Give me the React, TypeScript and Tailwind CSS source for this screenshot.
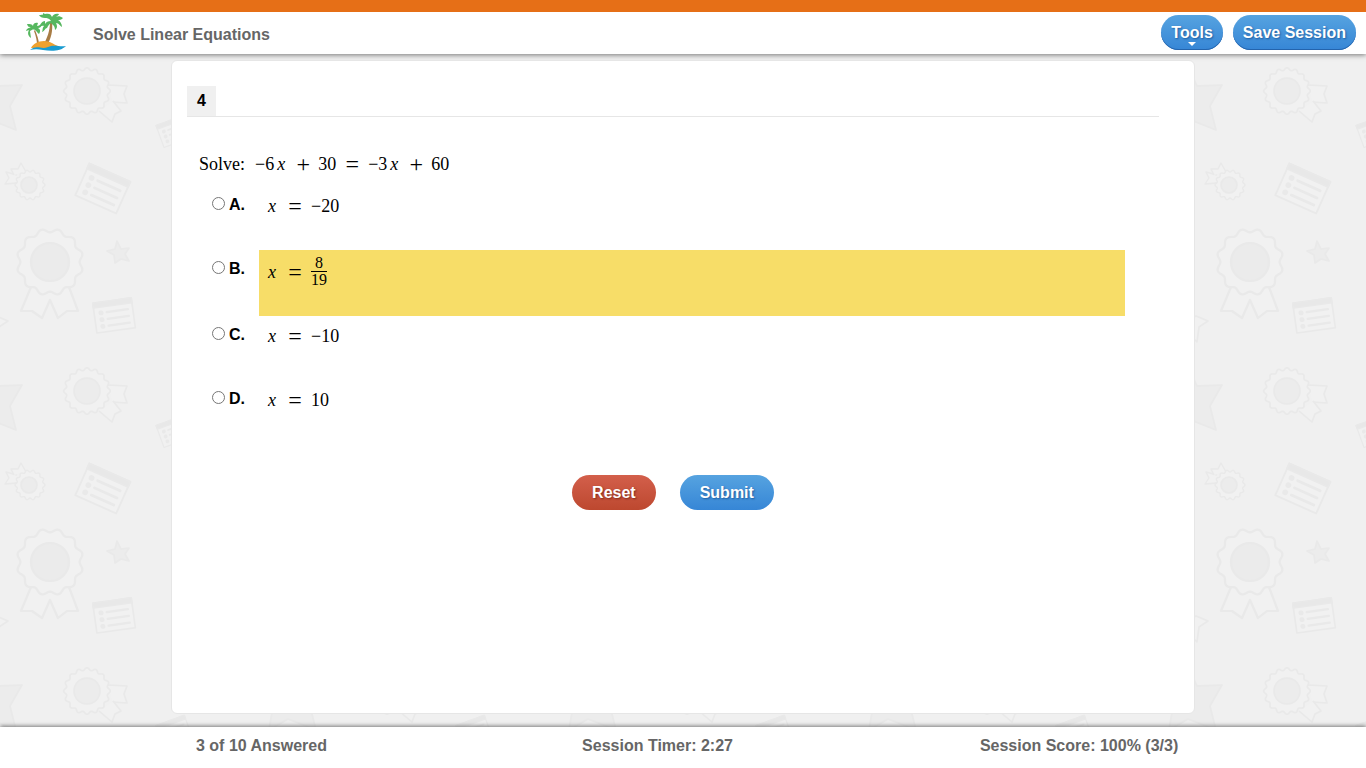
import { useState, type ReactNode } from 'react';

interface Choice {
  letter: string;
  value: ReactNode;
  label: string;
}

// Outline of a rosette with the given number of rounded lobes
function rosette(cx: number, cy: number, radius: number, depth: number, lobes: number, phase = 0) {
  const points: string[] = [];
  for (let i = 0; i < lobes * 12; i++) {
    const angle = (i / (lobes * 12)) * Math.PI * 2;
    const r = radius + depth * Math.cos(lobes * (angle + phase));
    points.push(`${(cx + r * Math.cos(angle)).toFixed(2)},${(cy + r * Math.sin(angle)).toFixed(2)}`);
  }
  return `M${points.join('L')}Z`;
}

function ListSheet() {
  return (
    <g strokeLinecap="round">
      <rect x="-20" y="-15" width="40" height="31" fill="#f1f1f1" />
      <rect x="-20" y="-15" width="40" height="5" fill="#e8e8e8" />
      <path d="M-7-4H15M-7 3H15M-7 10H15" strokeWidth="2.4" />
      <path d="M-13-4h.1M-13 3h.1M-13 10h.1" strokeWidth="5" />
    </g>
  );
}

function PatternBackground() {
  return (
    <svg className="absolute inset-0 -z-10 h-full w-full" aria-hidden="true">
      <defs>
        <pattern id="badges" width="300" height="300" patternUnits="userSpaceOnUse">
          <rect width="300" height="300" fill="#f0f0f0" />
          <g fill="#ececec" stroke="#e9e9e9" strokeWidth="1.6" strokeLinejoin="round">
            {/* Large star, split over the tile's left and right edges */}
            <path d="M22 85L-3 86L-12 66L-22 87L-44 90L-27 106L-31 130L-12 119L16 130L10 106Z" />
            <path d="M322 85L297 86L288 66L278 87L256 90L273 106L269 130L288 119L316 130L310 106Z" />

            <g fill="#f1f1f1">
              <path d="M108 85L127 86L124 94L127 103L112 102" />
              <path d="M99 111L112 122L115 114L121 111L113 101" />
              <path d={rosette(87, 91, 22, 1.3, 16)} />
            </g>
            <circle cx="87" cy="91" r="13" />

            <g fill="#f1f1f1" strokeWidth="1.3">
              <path d="M17 183L5 184L9 178L6 172L17 175" />
              <path d="M14 175L11 169L18 169L21 163L26 172" />
              <path d={rosette(30, 185, 14, 1, 14)} />
            </g>
            <circle cx="29" cy="185" r="8" />

            <g transform="translate(103 188) rotate(24) scale(1.12)">
              <ListSheet />
            </g>
            <g transform="translate(174 131) rotate(-20) scale(.75)">
              <ListSheet />
            </g>
            <g transform="translate(114 315) rotate(-8) scale(.97)">
              <ListSheet />
            </g>
            <g transform="translate(114 15) rotate(-8) scale(.97)">
              <ListSheet />
            </g>

            <g fill="#f1f1f1" strokeWidth="2.2">
              <path d="M31 287L21 311L32 311L42 318L50 300L58 318L67 311L78 311L69 287" />
              <path d="M31-13L21 11L32 11L42 18L50 0L58 18L67 11L78 11L69-13" />
              <path d={rosette(50, 262, 31.5, 1.9, 12, Math.PI / 12)} />
              <circle cx="50" cy="262" r="19" fill="#ebebeb" />
            </g>
            <path d="M117 241L121 249L129 248L125 254L129 261L121 259L115 263L114 255L107 251L115 249Z" />
            <path d="M-4 16L8 21L-1 27L-3 42L-13 32L-24 35L-17 23Z" fill="#f1f1f1" />
            <path d="M296 16L308 21L299 27L297 42L287 32L276 35L283 23Z" fill="#f1f1f1" />
          </g>
        </pattern>
      </defs>
      <rect width="100%" height="100%" fill="url(#badges)" />
    </svg>
  );
}

function PalmLogo() {
  return (
    <svg className="h-10 w-10" viewBox="0 0 40 40" aria-hidden="true">
      <path d="M24 9C24 18 21 25 18 31L21 32C25 26 27 18 26 9Z" fill="#a87c45" />
      <path d="M8 18C10 23 11 28 11 32L13 32C13 27 11 22 9 17Z" fill="#a87c45" />
      <path d="M5 35C7 31 12 28 18 28C24 28 27 31 32 33L24 36Z" fill="#efa12e" />
      <path d="M4 37C11 31 15 37 22 34C28 31 33 34 40 33C34 39 24 38 17 37C12 36 8 36 4 37Z" fill="#189bd1" />
      <path
        d="M25 8C22 8 20 9 19 11L19 8C16 8 15 11 13 13C15 14 16 12 18 13C16 15 17 17 16 19C19 18 19 15 21 15C22 13 23 11 25 10C27 12 29 13 29 17C32 15 31 12 30 10C33 10 34 13 36 14C36 11 34 8 32 7C34 7 35 7 37 5C34 3 32 3 30 4C31 3 33 2 33 1C29 0 27 2 26 4C25 1 23 0 19 1L17 0C17 1 18 2 13 2C14 4 16 5 19 5C21 5 23 5 25 8Z"
        fill="#56b75f"
      />
      <path
        d="M9 17C7 16 6 17 4 18L5 25C1 22 2 19 3 17L0 18C1 15 3 15 5 14C3 14 2 14 1 11C4 11 6 11 7 13C7 11 9 9 12 10L11 13L16 12C15 14 14 15 12 15C14 16 15 18 13 21C11 20 11 18 9 17Z"
        fill="#56b75f"
      />
    </svg>
  );
}

function Plus() {
  return <span className="w-[30px] text-center text-2xl leading-6">+</span>;
}

function Equals() {
  return <span className="w-8 text-center text-2xl leading-6">=</span>;
}

function Variable() {
  return <i className="w-[14px] text-center">x</i>;
}

function Equation({ children }: { children: ReactNode }) {
  return (
    <span className="flex items-center font-['Liberation_Serif',serif] text-lg leading-6 font-normal">{children}</span>
  );
}

const choices: Choice[] = [
  { letter: 'A', value: '−20', label: 'x = −20' },
  {
    letter: 'B',
    value: (
      <span className="flex flex-col text-center text-base leading-4">
        <span className="border-b border-black">8</span>
        <span>19</span>
      </span>
    ),
    label: 'x = 8/19',
  },
  { letter: 'C', value: '−10', label: 'x = −10' },
  { letter: 'D', value: '10', label: 'x = 10' },
];

const pill = 'h-[35px] rounded-full font-bold text-white cursor-pointer';
const blue = 'bg-linear-to-b from-[#56a3e0] to-[#3686d6] [text-shadow:1px_1px_2px_#1d5c9c]';
const red = 'bg-linear-to-b from-[#d35f4b] to-[#bd482f] [text-shadow:1px_1px_2px_#7d2a1a]';

export default function App() {
  const [selected, setSelected] = useState<string | null>(null);
  const [highlighted, setHighlighted] = useState('B');

  return (
    <div className="relative isolate flex min-h-screen flex-col font-['Liberation_Sans',Arial,sans-serif] text-base text-black">
      <PatternBackground />

      <header className="flex border-t-12 border-[#e66f17] bg-white pr-[10px] pl-[26px] shadow-[0_1px_5px_#777]">
        <div className="flex h-[42px] flex-1 items-center gap-[27px]">
          <PalmLogo />
          <h1 className="pt-1 font-bold text-[#666]">Solve Linear Equations</h1>
        </div>
        <div className="flex gap-[10px] pt-[3px]">
          <button type="button" className={`${pill} ${blue} relative px-[10px] shadow-[inset_0_-1px_0_#2464ad]`}>
            Tools
            <svg className="absolute bottom-1 left-1/2 h-1 w-2 -translate-x-1/2" viewBox="0 0 8 4" aria-hidden="true">
              <path d="M0 0H8L4 4Z" fill="white" />
            </svg>
          </button>
          <button type="button" className={`${pill} ${blue} px-[10px] shadow-[inset_0_-1px_0_#2464ad]`}>
            Save Session
          </button>
        </div>
      </header>

      <main className="mx-auto mt-[6px] mb-[13px] w-full max-w-[1024px] flex-1 rounded-md border border-[#e6e6e6] bg-white pt-[25px] pr-[35px] pl-[15px]">
        <div className="flex border-b border-[#e6e6e6]">
          <h2 className="bg-[#f0f0f0] px-[10px] py-[3px] leading-6 font-bold">4</h2>
        </div>

        <form
          onSubmit={(e) => e.preventDefault()}
          onReset={() => {
            setSelected(null);
            setHighlighted('');
          }}
        >
          <fieldset className="pt-[35px] pr-[34px] pl-3" aria-label="Answer choices">
            <Equation>
              <span className="w-14">Solve:</span>
              <span>−6</span>
              <Variable />
              <Plus />
              <span>30</span>
              <Equals />
              <span>−3</span>
              <Variable />
              <Plus />
              <span>60</span>
            </Equation>

            <div className="pt-[10px]">
              {choices.map(({ letter, value, label }) => (
                <div key={letter} className="flex pl-[13px]">
                  <label className="flex w-[47px] gap-1 pt-[7px] leading-6 font-bold">
                    <input
                      type="radio"
                      name="answer"
                      aria-label={`${letter}. ${label}`}
                      className="mt-1 h-[13px] w-[13px]"
                      checked={selected === letter}
                      onChange={() => setSelected(letter)}
                    />
                    {letter}.
                  </label>
                  <div
                    onClick={() => {
                      setSelected(letter);
                      setHighlighted(letter);
                    }}
                    className={`flex-1 pl-[6px] ${
                      highlighted === letter ? 'h-[66px] bg-[#f7dd68] pt-[5px]' : 'h-16 pt-2'
                    }`}
                  >
                    <Equation>
                      <Variable />
                      <Equals />
                      {value}
                    </Equation>
                  </div>
                </div>
              ))}
            </div>
          </fieldset>

          <div className="flex justify-center gap-6 pt-[31px] pb-8">
            <button type="reset" className={`${pill} ${red} px-5`}>
              Reset
            </button>
            <button type="submit" className={`${pill} ${blue} px-5`}>
              Submit
            </button>
          </div>
        </form>
      </main>

      <footer className="grid h-[41px] grid-cols-[33fr_34fr_33fr] bg-white pt-[7px] pl-49 leading-6 font-bold text-[#666] shadow-[0_-1px_4px_#777]">
        <p>3 of 10 Answered</p>
        <p>Session Timer: 2:27</p>
        <p>Session Score: 100% (3/3)</p>
      </footer>
    </div>
  );
}
